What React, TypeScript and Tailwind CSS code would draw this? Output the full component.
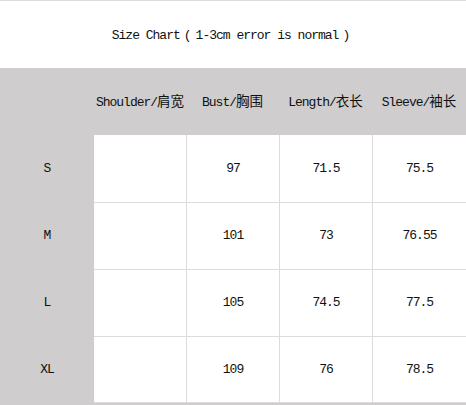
import React from 'react';

const rows = [
  { size: 'S', bust: '97', length: '71.5', sleeve: '75.5' },
  { size: 'M', bust: '101', length: '73', sleeve: '76.55' },
  { size: 'L', bust: '105', length: '74.5', sleeve: '77.5' },
  { size: 'XL', bust: '109', length: '76', sleeve: '78.5' },
];

function Label({ en, zh }: { en: string; zh?: string }) {
  return (
    <span className="whitespace-nowrap">
      {en}
      {zh && <span className="tracking-normal text-[13.5px] font-['Noto_Sans_CJK_SC',sans-serif]">{zh}</span>}
    </span>
  );
}

export default function App() {
  const mono = "font-['Liberation_Mono','Noto_Sans_CJK_SC',monospace] text-[13px] tracking-[-1px] text-[#111]";
  return (
    <div className={`w-[466px] h-[405px] bg-[#cfcdce] overflow-hidden ${mono}`}>
      <div className="h-[68px] bg-white border-t border-[#dcdcdc] flex items-center justify-center pt-[2px]">
        <Label en="Size Chart" />
        <span className="px-[4px] tracking-normal">(</span>
        <Label en="1-3cm error is normal" />
        <span className="px-[4px] tracking-normal">)</span>
      </div>
      <div className="grid grid-cols-[94px_92px_93px_93px_94px] h-[67px] items-center text-center">
        <div />
        <Label en="Shoulder/" zh="肩宽" />
        <Label en="Bust/" zh="胸围" />
        <Label en="Length/" zh="衣长" />
        <Label en="Sleeve/" zh="袖长" />
      </div>
      <div className="flex flex-col">
        {rows.map((r, i) => (
          <div
            key={r.size}
            className="grid grid-cols-[94px_92px_93px_93px_94px] h-[67px] text-center"
          >
            <div className="flex items-center justify-center">{r.size}</div>
            <div className={`bg-white border-[#dcdcdc] ${i > 0 ? 'border-t' : ''} ${i === 3 ? 'border-b' : ''}`} />
            <div className={`bg-white flex items-center justify-center border-l border-[#dcdcdc] ${i > 0 ? 'border-t' : ''} ${i === 3 ? 'border-b' : ''}`}>{r.bust}</div>
            <div className={`bg-white flex items-center justify-center border-l border-[#dcdcdc] ${i > 0 ? 'border-t' : ''} ${i === 3 ? 'border-b' : ''}`}>{r.length}</div>
            <div className={`bg-white flex items-center justify-center border-l border-[#dcdcdc] ${i > 0 ? 'border-t' : ''} ${i === 3 ? 'border-b' : ''}`}>{r.sleeve}</div>
          </div>
        ))}
      </div>
    </div>
  );
}
